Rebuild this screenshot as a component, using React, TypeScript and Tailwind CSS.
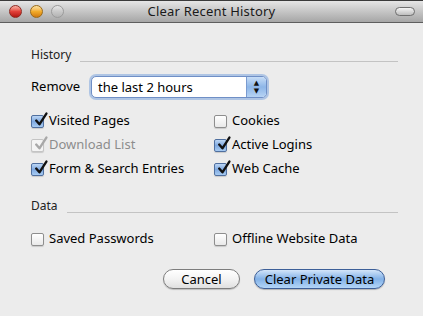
import React from "react";

type CheckProps = {
  label: string;
  checked?: boolean;
  disabled?: boolean;
};

function CheckMark({ color }: { color: string }) {
  return (
    <svg
      viewBox="0 0 14 14"
      className="absolute -top-[4px] left-[1px] h-[16px] w-[15px]"
    >
      <path
        d="M3 7.5 L6 11 L12.5 1"
        fill="none"
        stroke={color}
        strokeWidth="2.2"
        strokeLinecap="round"
        strokeLinejoin="round"
      />
    </svg>
  );
}

function Check({ label, checked, disabled }: CheckProps) {
  let box =
    "border-[#8e8e8e] bg-gradient-to-b from-[#ffffff] to-[#e9e9e9]";
  if (checked && !disabled)
    box =
      "border-[#4f6f9f] bg-gradient-to-b from-[#bcd6f4] via-[#7fa9e0] to-[#a7cbf2]";
  if (disabled) box = "border-[#c4c4c4] bg-[#f4f4f4]";

  return (
    <div className="flex h-[24px] items-center">
      <div
        className={`relative h-[13px] w-[13px] rounded-[2px] border shadow-[0_1px_1px_rgba(0,0,0,0.15)] ${box}`}
      >
        {checked && <CheckMark color={disabled ? "#a8a8a8" : "#111"} />}
      </div>
      <span
        className={`ml-[5px] text-[13px] ${
          disabled ? "text-[#8c8c8c]" : "text-black"
        }`}
      >
        {label}
      </span>
    </div>
  );
}

function SectionHeader({ title }: { title: string }) {
  return (
    <div className="flex items-end">
      <span className="text-[12px] leading-[16px] text-[#222]">{title}</span>
      <div className="mb-[1px] ml-[9px] h-px flex-1 bg-[#c3c3c3]" />
    </div>
  );
}

function TrafficLight({ tone }: { tone: "red" | "yellow" | "gray" }) {
  const colors = {
    red: "from-[#f6b0a6] via-[#e2413a] to-[#b2150f] border-[#8e2a22]",
    yellow: "from-[#fbe3a1] via-[#f2ac2a] to-[#d27a0e] border-[#9a6a18]",
    gray: "from-[#e8e8e8] via-[#c9c9c9] to-[#b3b3b3] border-[#9b9b9b]",
  };
  return (
    <div
      className={`h-[13px] w-[13px] rounded-full border bg-gradient-to-b ${colors[tone]}`}
    />
  );
}

export default function App() {
  return (
    <div
      className="h-[316px] w-[423px] overflow-hidden bg-[#ececec] text-black"
      style={{ fontFamily: '"Lucida Grande", "Noto Sans", "DejaVu Sans", sans-serif' }}
    >
      {/* title bar */}
      <div className="grid h-[23px] grid-cols-[1fr_auto_1fr] items-center border-t border-[#3b3b3b] border-b border-b-[#5e5e5e] bg-gradient-to-b from-[#e6e6e6] to-[#a6a6a6]">
        <div className="flex items-center gap-[8px] pl-[9px]">
          <TrafficLight tone="red" />
          <TrafficLight tone="yellow" />
          <TrafficLight tone="gray" />
        </div>
        <span className="text-[13px] tracking-[0.2px] text-[#1a1a1a]">Clear Recent History</span>
        <div className="flex justify-end pr-[8px]">
          <div className="h-[9px] w-[20px] rounded-full border border-[#6f6f6f] bg-gradient-to-b from-[#f4f4f4] to-[#bdbdbd]" />
        </div>
      </div>

      <div className="pl-[31px] pr-[25px] pt-[24px]">
        <SectionHeader title="History" />

        <div className="mt-[13px] flex items-center">
          <span className="w-[60px] text-[13px]">Remove</span>
          <div className="flex h-[22px] w-[176px] overflow-hidden rounded-[5px] border border-[#6f8fc6] bg-white shadow-[0_0_0_2px_rgba(126,166,222,0.55)]">
            <span className="flex-1 pl-[6px] text-[13px] leading-[20px]">
              the last 2 hours
            </span>
            <div className="flex w-[20px] flex-col items-center justify-center border-l border-[#7a9bd0] bg-gradient-to-b from-[#c7ddf6] via-[#8db6e8] to-[#b6d3f4] text-[7px] leading-[8px] text-[#111]">
              <span>▲</span>
              <span>▼</span>
            </div>
          </div>
        </div>

        <div className="mt-[11px] grid grid-cols-[183px_1fr]">
          <div className="flex flex-col">
            <Check label="Visited Pages" checked />
            <Check label="Download List" checked disabled />
            <Check label="Form & Search Entries" checked />
          </div>
          <div className="flex flex-col">
            <Check label="Cookies" />
            <Check label="Active Logins" checked />
            <Check label="Web Cache" checked />
          </div>
        </div>

        <div className="mt-[17px]">
          <SectionHeader title="Data" />
        </div>

        <div className="mt-[13px] grid grid-cols-[183px_1fr]">
          <Check label="Saved Passwords" />
          <Check label="Offline Website Data" />
        </div>

        <div className="mt-[18px] flex justify-end gap-[14px] pr-[13px]">
          <button className="h-[20px] w-[77px] rounded-full border border-[#7d7d7d] bg-gradient-to-b from-[#ffffff] via-[#f3f3f3] to-[#e0e0e0] text-[13px] leading-[18px] shadow-[0_1px_1px_rgba(0,0,0,0.2)]">
            Cancel
          </button>
          <button className="h-[20px] w-[131px] rounded-full border border-[#3d5f98] bg-gradient-to-b from-[#d3e5f9] via-[#82b1e7] to-[#b4d6f7] text-[13px] leading-[18px] shadow-[0_1px_1px_rgba(0,0,0,0.25)]">
            Clear Private Data
          </button>
        </div>
      </div>
    </div>
  );
}
